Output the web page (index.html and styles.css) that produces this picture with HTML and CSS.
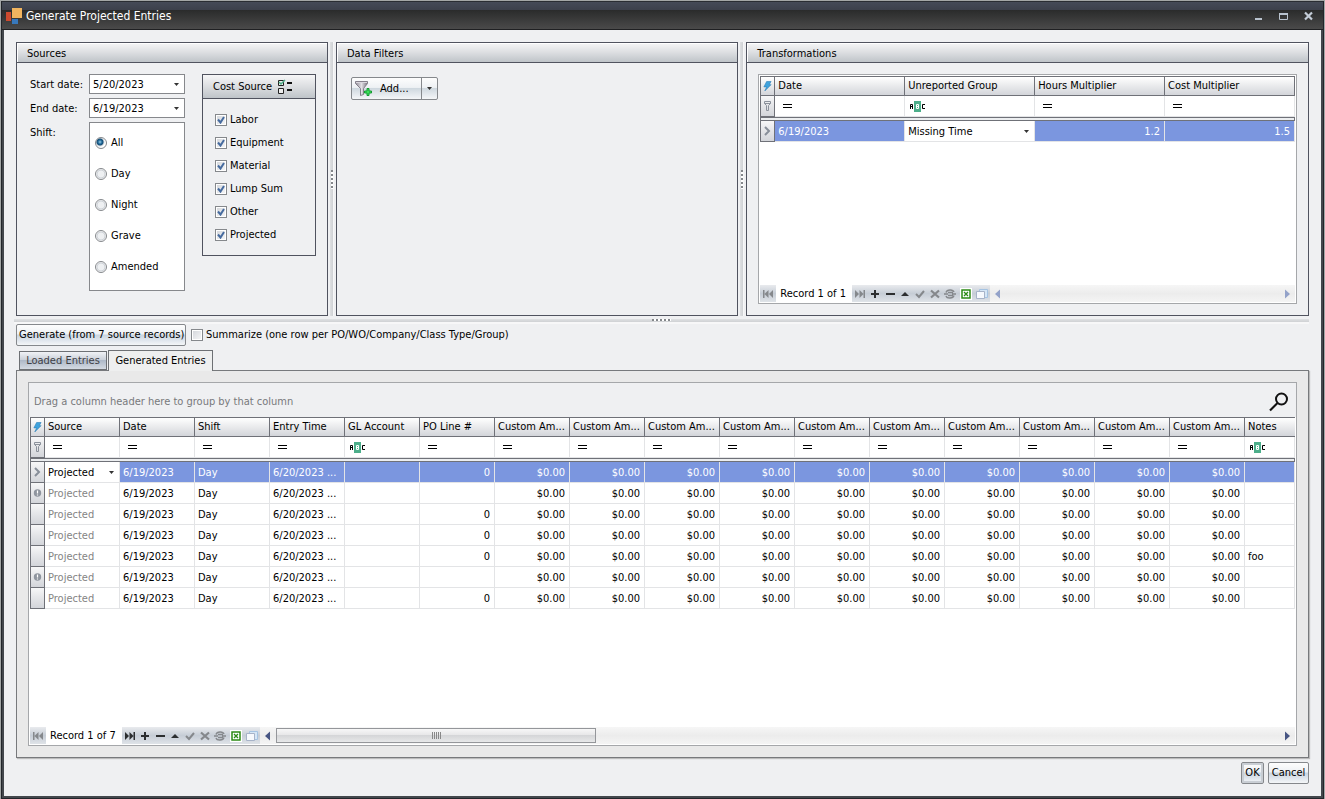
FILE: index.html
```html
<!DOCTYPE html>
<html lang="en">
<head>
<meta charset="utf-8">
<title>Generate Projected Entries</title>
<link rel="stylesheet" href="styles.css">
</head>
<body>
<svg class="sprite" aria-hidden="true">
  <symbol id="i-bolt" viewBox="0 0 10 12"><path d="M4 1h5L7 4.500h2L2 11.500l2-4.500H1z" fill="#3fa3dd" stroke="#2377b3" stroke-width=".6"/></symbol>
  <symbol id="i-pin" viewBox="0 0 9 12"><path d="M1.500 1.500h6v2l-2 2v5h-2v-5l-2-2zM1.500 3.500h6" fill="none" stroke="#8b919b"/></symbol>
  <symbol id="i-cur" viewBox="0 0 9 12"><path d="M2 2l4 4-4 4" fill="none" stroke="#878e99" stroke-width="2"/></symbol>
  <symbol id="i-warn" viewBox="0 0 9 12"><circle cx="4.500" cy="6" r="3.700" fill="#8f959f"/><path d="M4.500 3.400v3M4.500 7.400v1.200" stroke="#fff" stroke-width="1.200"/></symbol>
  <symbol id="i-eq" viewBox="0 0 9 12"><path d="M0 4.500h9M0 7.500h9" stroke="#000"/></symbol>
  <symbol id="i-abc" viewBox="0 0 16 12"><path d="M4 1h7v11H4z" fill="#4cae8a"/><path d="M.5 9V4.500H2.500V9M.5 6.500h2" fill="none" stroke="#000"/><path d="M6.500 4.500h2v4h-2zM6.500 6.500h2" fill="none" stroke="#fff"/><path d="M15 4.500h-2.500v4H15" fill="none" stroke="#000"/></symbol>
  <symbol id="i-first" viewBox="0 0 12 12"><path d="M1 2h1.500v8H1zM6.500 2v8l-4-4zM11 2v8L7 6z"/></symbol>
  <symbol id="i-last" viewBox="0 0 12 12"><path d="M9.500 2H11v8H9.500zM5.500 2v8l4-4zM1 2v8l4-4z"/></symbol>
  <symbol id="i-plus" viewBox="0 0 12 12"><path d="M5 2h2v3h3v2H7v3H5V7H2V5h3z"/></symbol>
  <symbol id="i-minus" viewBox="0 0 12 12"><path d="M2 5h9v2H2z"/></symbol>
  <symbol id="i-up" viewBox="0 0 12 12"><path d="M6 4l4 4H2z"/></symbol>
  <symbol id="i-check" viewBox="0 0 12 12"><path d="M2 6l3 3 5-6" fill="none" stroke="currentColor" stroke-width="2"/></symbol>
  <symbol id="i-x" viewBox="0 0 12 12"><path d="M2 2.500l8 7M10 2.500l-8 7" stroke="currentColor" stroke-width="2.200"/></symbol>
  <symbol id="i-link" viewBox="0 0 12 12"><path d="M2 4.500C3 1.200 9 1.200 10 4M10 7.500C9 10.800 3 10.800 2 8M0 6h4M8 6h4M4 4.500h5M4 7.500h5" fill="none" stroke="currentColor" stroke-width="1.400"/></symbol>
  <symbol id="i-xls" viewBox="0 0 12 12"><path d="M0 0h12v12H0z" fill="#fff"/><path d="M2 2h8v8H2z" fill="#fff" stroke="#2c8a14" stroke-width="1.500"/><path d="M4 4l4 4M8 4l-4 4" stroke="#2c8a14" stroke-width="1.300"/></symbol>
  <symbol id="i-copy" viewBox="0 0 12 12"><path d="M3.500 1.500h8v8h-8z" fill="#d5e6f6" stroke="#a5c3e2"/><path d="M.5 3.500h8v7h-8z" fill="#f6f9fd" stroke="#a7b3c8"/></symbol>
  <symbol id="i-left" viewBox="0 0 8 12"><path d="M6 1.500v9L1 6z"/></symbol>
  <symbol id="i-right" viewBox="0 0 8 12"><path d="M2 1.500v9L7 6z"/></symbol>
</svg>

<div class="window">
  <header class="titlebar">
    <svg class="logo" viewBox="0 0 16 16"><path d="M0 4h5v9H0z" fill="#cc4a2f"/><path d="M6 0h10v10H6z" fill="#f0b45f"/><path d="M6 11h6v5H6z" fill="#3878bb"/></svg>
    <h1>Generate Projected Entries</h1>
    <button class="wbtn" aria-label="Minimize"><svg viewBox="0 0 10 10"><path d="M1 8h7" stroke="#b9c3cf" stroke-width="2"/></svg></button>
    <button class="wbtn" aria-label="Maximize"><svg viewBox="0 0 10 10"><path d="M.5 2.500h8v6h-8z" fill="none" stroke="#b9c3cf"/><path d="M0 3h9" stroke="#b9c3cf" stroke-width="2"/></svg></button>
    <button class="wbtn" aria-label="Close"><svg viewBox="0 0 10 10"><path d="M1 1.500l7 7M8 1.500l-7 7" stroke="#c3ccd7" stroke-width="2.200"/></svg></button>
  </header>

  <main class="content">
    <div class="top">
      <section class="panel sources">
        <h2>Sources</h2>
        <div class="src-body">
          <div class="form">
            <label for="sd">Start date:</label>
            <div class="combo"><input id="sd" type="text" value="5/20/2023"><button aria-label="Open start date calendar"></button></div>
            <label for="ed">End date:</label>
            <div class="combo"><input id="ed" type="text" value="6/19/2023"><button aria-label="Open end date calendar"></button></div>
            <span class="lbl" id="shift">Shift:</span>
            <div class="radios" role="radiogroup" aria-labelledby="shift">
              <label><input type="radio" name="shift" checked>All</label>
              <label><input type="radio" name="shift">Day</label>
              <label><input type="radio" name="shift">Night</label>
              <label><input type="radio" name="shift">Grave</label>
              <label><input type="radio" name="shift">Amended</label>
            </div>
          </div>
          <div class="cost">
            <h3>Cost Source <svg viewBox="0 0 16 16"><path d="M1.500 1.500h5v5h-5zM1.500 9.500h5v5h-5z" fill="#eee" stroke="#222"/><path d="M10 4h5M10 11h5" stroke="#111" stroke-width="2"/><path d="M2 3l2 2 4-4" fill="none" stroke="#4cae8a" stroke-width="1.500"/></svg></h3>
            <div class="checks">
              <label><input type="checkbox" checked>Labor</label>
              <label><input type="checkbox" checked>Equipment</label>
              <label><input type="checkbox" checked>Material</label>
              <label><input type="checkbox" checked>Lump Sum</label>
              <label><input type="checkbox" checked>Other</label>
              <label><input type="checkbox" checked>Projected</label>
            </div>
          </div>
        </div>
      </section>
      <div class="vsplit"><span></span></div>
      <section class="panel filters">
        <h2>Data Filters</h2>
        <div class="filter-body">
          <div class="split-btn">
            <button class="add"><svg viewBox="0 0 17 17"><defs><linearGradient id="fg"><stop offset="0" stop-color="#8c8792"/><stop offset=".5" stop-color="#e2e0e5"/><stop offset="1" stop-color="#77727d"/></linearGradient></defs><path d="M.5 1.500h12v2l-4 5v6l-3 1v-7l-5-5z" fill="url(#fg)" stroke="#85808b"/><path d="M1 2.500h11" stroke="#d8d5dc"/><path d="M12 8.500h2v2.500h2.500v2H14v2.500h-2V13H9.500v-2H12z" fill="#3be05a" stroke="#159a32"/></svg>Add...</button>
            <button class="drop" aria-label="More filters"></button>
          </div>
        </div>
      </section>
      <div class="vsplit"><span></span></div>
      <section class="panel transforms">
        <h2>Transformations</h2>
        <div class="grid">
          <table class="t1">
            <colgroup><col class="ci"><col><col><col><col></colgroup>
            <thead>
              <tr><th><svg class="ic"><use href="#i-bolt"/></svg></th><th>Date</th><th>Unreported Group</th><th>Hours Multiplier</th><th>Cost Multiplier</th></tr>
              <tr class="fr"><td><svg class="ic"><use href="#i-pin"/></svg></td><td><svg class="eq"><use href="#i-eq"/></svg></td><td><svg class="abc"><use href="#i-abc"/></svg></td><td><svg class="eq"><use href="#i-eq"/></svg></td><td><svg class="eq"><use href="#i-eq"/></svg></td></tr>
              <tr class="sep"><td colspan="5"></td></tr>
            </thead>
            <tbody>
              <tr class="sel"><td><svg class="ic"><use href="#i-cur"/></svg></td><td>6/19/2023</td><td class="edit"><select aria-label="Unreported group"><option>Missing Time</option></select></td><td class="n">1.2</td><td class="n">1.5</td></tr>
            </tbody>
          </table>
          <div class="nav">
            <div class="nb dim"><button class="first" aria-label="First"><svg><use href="#i-first"/></svg></button></div>
            <span class="rec">Record 1 of 1</span>
            <div class="nb">
              <button class="dim" aria-label="Last"><svg><use href="#i-last"/></svg></button><button aria-label="Append"><svg><use href="#i-plus"/></svg></button><button aria-label="Delete"><svg><use href="#i-minus"/></svg></button><button aria-label="Edit"><svg><use href="#i-up"/></svg></button><button class="dim" aria-label="Apply"><svg><use href="#i-check"/></svg></button><button class="dim" aria-label="Cancel edit"><svg><use href="#i-x"/></svg></button><button class="dim link" aria-label="Link"><svg><use href="#i-link"/></svg></button><button aria-label="Export"><svg><use href="#i-xls"/></svg></button><button class="wide" aria-label="Copy"><svg><use href="#i-copy"/></svg></button>
            </div>
            <div class="scroll off"><button aria-label="Scroll left"><svg><use href="#i-left"/></svg></button><span class="track"></span><button aria-label="Scroll right"><svg><use href="#i-right"/></svg></button></div>
          </div>
        </div>
      </section>
    </div>
    <div class="hsplit"><span></span></div>

    <div class="gen">
      <button class="btn">Generate (from 7 source records)</button>
      <label><input type="checkbox">Summarize (one row per PO/WO/Company/Class Type/Group)</label>
    </div>

    <div class="tabs" role="tablist">
      <button class="tab" role="tab">Loaded Entries</button>
      <button class="tab on" role="tab" aria-selected="true">Generated Entries</button>
    </div>
    <section class="page">
      <div class="grid">
        <div class="group">Drag a column header here to group by that column
          <button aria-label="Search"><svg viewBox="0 0 20 20"><circle cx="12.500" cy="7" r="5.500" fill="none" stroke="#111" stroke-width="2"/><path d="M8.500 11L1 18.500" stroke="#111" stroke-width="2.200"/></svg></button>
        </div>
        <table class="t2">
          <colgroup><col class="ci"><col class="c" span="16"><col></colgroup>
          <thead>
            <tr><th><svg class="ic"><use href="#i-bolt"/></svg></th><th>Source</th><th>Date</th><th>Shift</th><th>Entry Time</th><th>GL Account</th><th>PO Line #</th><th>Custom Am...</th><th>Custom Am...</th><th>Custom Am...</th><th>Custom Am...</th><th>Custom Am...</th><th>Custom Am...</th><th>Custom Am...</th><th>Custom Am...</th><th>Custom Am...</th><th>Custom Am...</th><th>Notes</th></tr>
            <tr class="fr"><td><svg class="ic"><use href="#i-pin"/></svg></td><td><svg class="eq"><use href="#i-eq"/></svg></td><td><svg class="eq"><use href="#i-eq"/></svg></td><td><svg class="eq"><use href="#i-eq"/></svg></td><td><svg class="eq"><use href="#i-eq"/></svg></td><td><svg class="abc"><use href="#i-abc"/></svg></td><td><svg class="eq"><use href="#i-eq"/></svg></td><td><svg class="eq"><use href="#i-eq"/></svg></td><td><svg class="eq"><use href="#i-eq"/></svg></td><td><svg class="eq"><use href="#i-eq"/></svg></td><td><svg class="eq"><use href="#i-eq"/></svg></td><td><svg class="eq"><use href="#i-eq"/></svg></td><td><svg class="eq"><use href="#i-eq"/></svg></td><td><svg class="eq"><use href="#i-eq"/></svg></td><td><svg class="eq"><use href="#i-eq"/></svg></td><td><svg class="eq"><use href="#i-eq"/></svg></td><td><svg class="eq"><use href="#i-eq"/></svg></td><td><svg class="abc"><use href="#i-abc"/></svg></td></tr>
            <tr class="sep"><td colspan="18"></td></tr>
          </thead>
          <tbody>
            <tr class="sel"><td><svg class="ic"><use href="#i-cur"/></svg></td><td class="edit"><select aria-label="Source"><option>Projected</option></select></td><td>6/19/2023</td><td>Day</td><td>6/20/2023 ...</td><td></td><td class="n">0</td><td class="n">$0.00</td><td class="n">$0.00</td><td class="n">$0.00</td><td class="n">$0.00</td><td class="n">$0.00</td><td class="n">$0.00</td><td class="n">$0.00</td><td class="n">$0.00</td><td class="n">$0.00</td><td class="n">$0.00</td><td></td></tr>
            <tr><td><svg class="ic"><use href="#i-warn"/></svg></td><td class="ro">Projected</td><td>6/19/2023</td><td>Day</td><td>6/20/2023 ...</td><td></td><td class="n"></td><td class="n">$0.00</td><td class="n">$0.00</td><td class="n">$0.00</td><td class="n">$0.00</td><td class="n">$0.00</td><td class="n">$0.00</td><td class="n">$0.00</td><td class="n">$0.00</td><td class="n">$0.00</td><td class="n">$0.00</td><td></td></tr>
            <tr><td></td><td class="ro">Projected</td><td>6/19/2023</td><td>Day</td><td>6/20/2023 ...</td><td></td><td class="n">0</td><td class="n">$0.00</td><td class="n">$0.00</td><td class="n">$0.00</td><td class="n">$0.00</td><td class="n">$0.00</td><td class="n">$0.00</td><td class="n">$0.00</td><td class="n">$0.00</td><td class="n">$0.00</td><td class="n">$0.00</td><td></td></tr>
            <tr><td></td><td class="ro">Projected</td><td>6/19/2023</td><td>Day</td><td>6/20/2023 ...</td><td></td><td class="n">0</td><td class="n">$0.00</td><td class="n">$0.00</td><td class="n">$0.00</td><td class="n">$0.00</td><td class="n">$0.00</td><td class="n">$0.00</td><td class="n">$0.00</td><td class="n">$0.00</td><td class="n">$0.00</td><td class="n">$0.00</td><td></td></tr>
            <tr><td></td><td class="ro">Projected</td><td>6/19/2023</td><td>Day</td><td>6/20/2023 ...</td><td></td><td class="n">0</td><td class="n">$0.00</td><td class="n">$0.00</td><td class="n">$0.00</td><td class="n">$0.00</td><td class="n">$0.00</td><td class="n">$0.00</td><td class="n">$0.00</td><td class="n">$0.00</td><td class="n">$0.00</td><td class="n">$0.00</td><td>foo</td></tr>
            <tr><td><svg class="ic"><use href="#i-warn"/></svg></td><td class="ro">Projected</td><td>6/19/2023</td><td>Day</td><td>6/20/2023 ...</td><td></td><td class="n"></td><td class="n">$0.00</td><td class="n">$0.00</td><td class="n">$0.00</td><td class="n">$0.00</td><td class="n">$0.00</td><td class="n">$0.00</td><td class="n">$0.00</td><td class="n">$0.00</td><td class="n">$0.00</td><td class="n">$0.00</td><td></td></tr>
            <tr><td></td><td class="ro">Projected</td><td>6/19/2023</td><td>Day</td><td>6/20/2023 ...</td><td></td><td class="n">0</td><td class="n">$0.00</td><td class="n">$0.00</td><td class="n">$0.00</td><td class="n">$0.00</td><td class="n">$0.00</td><td class="n">$0.00</td><td class="n">$0.00</td><td class="n">$0.00</td><td class="n">$0.00</td><td class="n">$0.00</td><td></td></tr>
          </tbody>
        </table>
        <div class="nav">
          <div class="nb dim"><button class="first" aria-label="First"><svg><use href="#i-first"/></svg></button></div>
          <span class="rec">Record 1 of 7</span>
          <div class="nb">
            <button aria-label="Last"><svg><use href="#i-last"/></svg></button><button aria-label="Append"><svg><use href="#i-plus"/></svg></button><button aria-label="Delete"><svg><use href="#i-minus"/></svg></button><button aria-label="Edit"><svg><use href="#i-up"/></svg></button><button class="dim" aria-label="Apply"><svg><use href="#i-check"/></svg></button><button class="dim" aria-label="Cancel edit"><svg><use href="#i-x"/></svg></button><button class="dim link" aria-label="Link"><svg><use href="#i-link"/></svg></button><button aria-label="Export"><svg><use href="#i-xls"/></svg></button><button class="wide" aria-label="Copy"><svg><use href="#i-copy"/></svg></button>
          </div>
          <div class="scroll"><button aria-label="Scroll left"><svg><use href="#i-left"/></svg></button><span class="track"><span class="thumb"><i></i></span></span><button aria-label="Scroll right"><svg><use href="#i-right"/></svg></button></div>
        </div>
      </div>
    </section>

    <footer class="actions">
      <button class="btn default">OK</button>
      <button class="btn">Cancel</button>
    </footer>
  </main>
</div>
</body>
</html>
```

FILE: styles.css
```css
* { box-sizing: border-box; }
body {
  margin: 0;
  height: 100vh;
  display: flex;
  padding: 1px 1px 0;
  background: #a3a6a6;
  color: #000;
  font: 11px/14px Tahoma, "DejaVu Sans Condensed", "Noto Sans", sans-serif;
}
button, input, select { font: inherit; color: inherit; margin: 0; padding: 0; }
button { border: 0; background: none; }
h1, h2, h3 { margin: 0; font: inherit; }
.sprite { display: none; }

.window {
  flex: 1;
  min-width: 0;
  display: flex;
  flex-direction: column;
  border: 1px solid #22252a;
  border-top-color: #2a2d33;
  box-shadow: inset 0 0 0 2px #43474c;
  padding: 0 2px 2px;
}
.titlebar {
  display: flex;
  align-items: center;
  height: 28px;
  margin: 0 -2px;
  padding: 0 9px 0 4px;
  color: #fff;
  background: linear-gradient(#454a57 0, #3c404b 8px, #2a2b2b 8px, #4a4a4a 100%);
  border-bottom: 1px solid #1f2022;
}
.titlebar h1 { flex: 1; font-size: 12px; }
.logo { width: 16px; height: 16px; margin-right: 4px; }
.wbtn { width: 10px; height: 10px; margin-left: 15px; }
.wbtn svg { display: block; width: 10px; height: 10px; }

.content {
  flex: 1;
  min-height: 0;
  display: flex;
  flex-direction: column;
  background: #eff0f2;
  padding: 12px;
}
.top { display: flex; height: 274px; }
.panel {
  border: 1px solid #50535f;
  display: flex;
  flex-direction: column;
  min-width: 0;
}
.panel h2 {
  height: 20px;
  padding: 4px 10px 0;
  border-bottom: 1px solid #50535f;
  background: linear-gradient(#f6f6f7, #dcdee1 50%, #bfc4c9);
  box-shadow: inset 1px 1px #fff;
}
.sources { flex: 0 0 312px; }
.filters { flex: 402; }
.transforms { flex: 563; }

.vsplit {
  flex: 0 0 8px;
  display: flex;
  align-items: center;
  justify-content: center;
  background: linear-gradient(90deg, transparent 2px, #dfe1e3 2px, #cfd1d4 5px, #f7f7f8 5px, #f7f7f8 6px, transparent 6px);
}
.vsplit span {
  width: 2px;
  height: 19px;
  background: repeating-linear-gradient(#84878b 0 2px, #fff 2px 4px);
}
.hsplit {
  height: 8px;
  flex: none;
  display: flex;
  align-items: center;
  justify-content: center;
  margin: 0 0 0 -2px;
  background: linear-gradient(transparent 3px, #dfe1e3 3px, #cfd1d4 6px, #f7f7f8 6px);
}
.hsplit span {
  width: 19px;
  height: 2px;
  background: repeating-linear-gradient(90deg, #84878b 0 2px, #fff 2px 4px);
}

.src-body { display: flex; align-items: flex-start; padding: 11px 11px 0 13px; justify-content: space-between; }
.form { display: grid; grid-template-columns: 59px 96px; row-gap: 4px; }
.form > label, .lbl { padding-top: 4px; white-space: nowrap; }
.combo { display: flex; height: 20px; border: 1px solid #86888c; background: #fff; }
.combo input { flex: 1; min-width: 0; border: 0; padding: 1px 3px 0; background: none; }
.combo button, .drop { width: 15px; }
.combo button, .drop, select {
  background: url("data:image/svg+xml,%3Csvg xmlns='http://www.w3.org/2000/svg' width='5' height='3'%3E%3Cpath d='M0 0h5L2.500 3z' fill='%23333'/%3E%3C/svg%3E") no-repeat center;
}
.radios { border: 1px solid #86888c; background: #fff; height: 169px; padding: 5px; }
.radios label { display: flex; align-items: center; height: 31px; gap: 4px; padding-bottom: 1px; }
input[type="radio"], input[type="checkbox"] { appearance: none; flex: none; width: 12px; height: 12px; border: 1px solid #85888c; }
input[type="radio"] { border-radius: 50%; background: radial-gradient(circle, #eef0f2 0 3px, #c9ced4 4px, #fff 5px); }
input[type="radio"]:checked { background: radial-gradient(circle at 4px 4px, #9cd0ea 0, #1f6796 2px, #174f78 3px, #d4dade 4px, #fff 5px); }
input[type="checkbox"] { background: linear-gradient(135deg, #d2d5da, #f8f8f9); box-shadow: inset 0 0 0 1px #fff; }
input[type="checkbox"]:checked {
  background: url("data:image/svg+xml,%3Csvg xmlns='http://www.w3.org/2000/svg' width='10' height='10'%3E%3Cpath d='M2 4.500l2.500 3L8 2' fill='none' stroke='%23466b9f' stroke-width='2'/%3E%3C/svg%3E") center, linear-gradient(135deg, #d2d5da, #f8f8f9);
}

.cost { width: 114px; border: 1px solid #50535f; }
.cost h3 {
  display: flex;
  align-items: center;
  gap: 5px;
  height: 24px;
  padding: 1px 0 0 10px;
  border-bottom: 1px solid #50535f;
  background: linear-gradient(#f6f6f7, #dcdee1 50%, #bfc4c9);
}
.cost h3 svg { width: 16px; height: 16px; }
.checks { padding: 10px 12px 8px; }
.checks label { display: flex; align-items: center; gap: 3px; height: 23px; padding-bottom: 1px; }

.filter-body { padding: 14px; }
.split-btn {
  display: flex;
  width: 87px;
  height: 23px;
  border: 1px solid #85888c;
  border-radius: 2px;
  background: linear-gradient(#fdfdfd, #eef1f4 45%, #cfd8df 50%, #f4f6f8);
}
.add { display: flex; align-items: center; flex: 1; gap: 8px; padding-left: 3px; border-right: 1px solid #85888c; }
.add svg { width: 17px; height: 17px; }

.grid { flex: 1; min-height: 0; display: flex; flex-direction: column; border: 1px solid #a5a7aa; background: #fff; padding: 1px; }
.transforms .grid { margin: 11px; }
table { width: 100%; table-layout: fixed; border-collapse: separate; border-spacing: 0; }
.ci { width: 15px; }
.c { width: 75px; }
th, td { padding: 0 4px 0 3px; height: 21px; white-space: nowrap; overflow: hidden; text-align: left; font-weight: normal; }
tbody td { padding-top: 1px; }
th {
  height: 20px;
  border: 1px solid #6f7178;
  border-left: 0;
  background: linear-gradient(#fff, #e9eaec 50%, #d3d5da);
}
th:first-child, td:first-child { padding: 0 2px; border-left: 1px solid #6f7178; }
td { border-right: 1px solid #e3e4e6; border-bottom: 1px solid #e3e4e6; }
td:first-child {
  border-right-color: #6f7178;
  border-bottom-color: #6f7178;
  background: linear-gradient(#f7f7f8, #e4e5e8 50%, #d3d5da);
}
.t2 th:last-child { border-right: 0; }
.sep td:first-child { height: 4px; border: 1px solid #6f7178; background: #eceef0; padding: 0; }
.n { text-align: right; }
.ro { color: #848484; }
.sel td:not(:first-child) { background: #7b96df; color: #fff; }
.sel .edit:nth-child(n) { background: #fff; color: #000; }
.edit select { appearance: none; border: 0; width: 100%; height: 18px; background-position: right 1px center; display: block; }
.ic { display: block; width: 9px; height: 12px; }
.eq { display: block; width: 9px; height: 12px; margin-left: 5px; }
.abc { display: block; width: 16px; height: 12px; margin-left: 2px; }

.nav { display: flex; height: 17px; margin-top: auto; }
.nb { display: flex; background: linear-gradient(#e9ebee, #c6cdd6 50%, #dfe3e8); color: #2c2e30; fill: currentColor; }
.nb button { width: 15px; display: flex; align-items: center; justify-content: center; }
.nb .first, .nb .link { width: 16px; }
.nb .wide { width: 17px; }
.nb svg { width: 12px; height: 12px; flex: none; }
.dim, .nb .dim { color: #85888c; }
.rec { width: 76px; padding: 2px 0 0 4px; white-space: nowrap; }
.scroll { flex: 1; display: flex; align-items: center; background: linear-gradient(#f6f6f6, #ececec 50%, #f4f4f4); fill: #475583; }
.off { fill: #93a2c9; }
.scroll button { width: 16px; height: 17px; display: flex; align-items: center; justify-content: center; }
.scroll svg { width: 8px; height: 12px; }
.track { flex: 1; }
.thumb { display: flex; align-items: center; justify-content: center; width: 320px; height: 15px; border: 1px solid #94969a; background: linear-gradient(#f7f7f7, #e6e6e7 50%, #d5d6d8 50%, #e7e8e9); }
.thumb i { width: 9px; height: 7px; background: repeating-linear-gradient(90deg, #888 0 1px, transparent 1px 2px); }

.gen { display: flex; align-items: flex-start; gap: 5px; }
.gen label { display: flex; align-items: center; gap: 3px; height: 21px; }
.btn {
  height: 22px;
  padding: 0 2px;
  border: 1px solid #85888c;
  border-radius: 2px;
  background: linear-gradient(#fdfdfd, #eef1f4 45%, #c9d4e0 50%, #f4f6f8);
  white-space: nowrap;
}
.gen .btn { width: 170px; }
.default { box-shadow: inset 0 0 0 2px #c9ced4; }

.tabs { display: flex; align-items: flex-end; margin: 4px 0 -1px 3px; z-index: 1; }
.tab { height: 19px; width: 88px; margin-bottom: 1px; border: 1px solid #6d7074; background: linear-gradient(#f0f2f5, #c9cfd8 48%, #aeb9c8 50%, #d4dae2); color: #3e4046; white-space: nowrap; }
.tab.on { height: 21px; width: 105px; margin: 0 0 0 1px; background: #eeefef; border-bottom: 0; color: #000; }
.page { flex: 1; min-height: 0; display: flex; flex-direction: column; border: 1px solid #77797c; background: #e9e9e9; padding: 11px; box-shadow: 1px 1px 1px #bbb; }
.group { display: flex; align-items: center; justify-content: space-between; height: 34px; margin: -1px -1px 0; padding: 3px 7px 0 5px; background: #eff0f2; color: #78797c; }
.group svg { display: block; width: 20px; height: 20px; }

.actions { display: flex; justify-content: flex-end; gap: 4px; margin-top: 4px; }
.actions .btn { width: 41px; }
.actions .default { width: 23px; padding: 0; }
```
